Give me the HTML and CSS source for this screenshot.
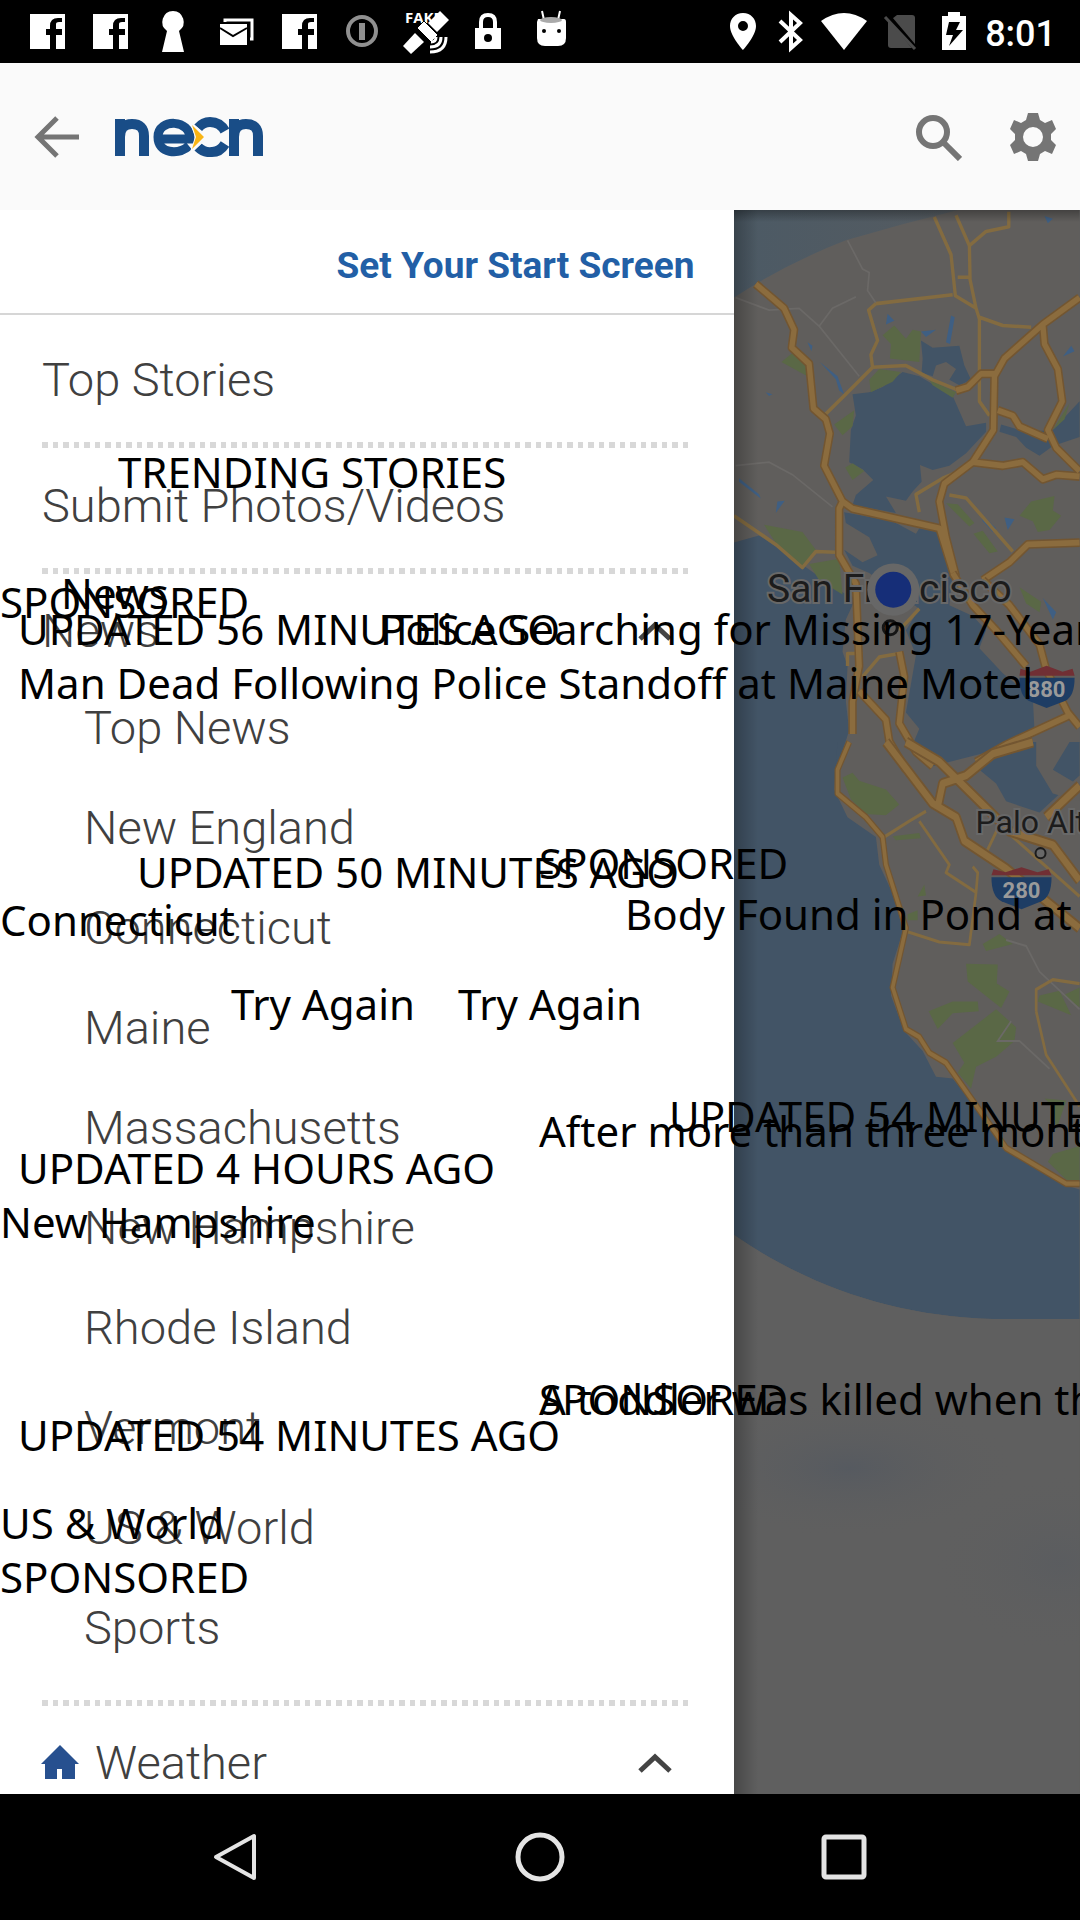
FILE: index.html
```html
<!DOCTYPE html>
<html lang="en">
<head>
<meta charset="utf-8">
<meta name="viewport" content="width=device-width, initial-scale=1">
<title>necn</title>
<link rel="stylesheet" href="styles.css">
</head>
<body>
<svg class="defs" aria-hidden="true">
  <symbol id="fb" viewBox="0 0 63 63"><path fill="#fff" d="M14 14h35v35H40V35h6v-6h-6v-5q0-2 3-2h3v-4h-4q-8 0-8 8v3h-4v6h4v14H14z"/></symbol>
  <symbol id="chevron" viewBox="0 0 36 24"><path d="M3 20 18 6l15 14" fill="none" stroke="#444" stroke-width="5"/></symbol>
</svg>

<header class="status">
  <div class="notices">
    <svg><use href="#fb"/></svg>
    <svg><use href="#fb"/></svg>
    <svg viewBox="0 0 63 63"><path fill="#fff" d="M31 11a11 11 0 0 1 6 20l5 21H20l5-21a11 11 0 0 1 6-20z"/></svg>
    <svg viewBox="0 0 63 63"><path d="M20 22v-2h27v19h-2" fill="none" stroke="#fff" stroke-width="3"/><path fill="#fff" d="M15 24h27v21H15z"/><path d="m15 28 13 8 14-8" fill="none" stroke="#000" stroke-width="2"/></svg>
    <svg><use href="#fb"/></svg>
    <svg viewBox="0 0 63 63"><circle cx="31" cy="31" r="14" fill="none" stroke="#909090" stroke-width="4"/><path d="M31 23v17" stroke="#909090" stroke-width="6"/></svg>
    <svg viewBox="0 0 63 63"><text x="11" y="23" class="fake">FAKE</text><path fill="#fff" d="m46 11 9 9-12 12-9-9z"/><path fill="#fff" stroke="#000" d="m30 21 14 14-7 7-14-14z"/><path fill="#fff" d="m21 33 9 9-13 12-8-8z"/><path d="M37 42q5 0 5-5M36 47q11 0 11-10M36 52q16 0 16-15" fill="none" stroke="#fff" stroke-width="3"/></svg>
    <svg viewBox="0 0 63 63"><path d="M24 30V22q0-7 7-7t7 7v8" fill="none" stroke="#fff" stroke-width="4"/><path fill="#fff" d="M18 28h26v21H18z"/><circle cx="31" cy="38" r="4"/></svg>
    <svg viewBox="0 0 63 63"><path d="m22 11 2 9m16-9-2 9" stroke="#fff" stroke-width="2"/><path fill="#fff" d="M18 19h26q2 0 2 3v16q0 8-8 8H25q-8 0-8-8V22z"/><ellipse cx="31" cy="20" rx="11" ry="3" fill="#aaa"/><circle cx="24" cy="31" r="2"/><circle cx="39" cy="31" r="2"/></svg>
  </div>
  <div class="system">
    <svg class="s48" viewBox="0 0 48 63"><path fill="#fff" fill-rule="evenodd" d="M24 13c8 0 13 6 13 13 0 10-13 24-13 24S11 36 11 26c0-7 5-13 13-13zm0 8a5 5 0 1 0 0 10 5 5 0 0 0 0-10z"/></svg>
    <svg class="s48" viewBox="0 0 48 63"><path d="m13 21 20 19-9 8V15l9 8-20 19" fill="none" stroke="#fff" stroke-width="4"/></svg>
    <svg class="s58" viewBox="0 0 58 63"><path fill="#fff" d="M6 21q23-16 46 0L29 50z"/></svg>
    <svg class="s54" viewBox="0 0 54 63"><path fill="#4b4b4b" d="M24 15h15q3 0 3 3v27q0 3-3 3H18q-3 0-3-3V22z"/><path d="m15 16 28 33" stroke="#000" stroke-width="5"/><path d="m12 17 30 32" stroke="#4b4b4b" stroke-width="3"/></svg>
    <svg class="s54" viewBox="0 0 54 63"><path fill="#fff" fill-rule="evenodd" d="M21 12h12v4h6v34H15V16h6zm1 10-3 13h7l-4 11 14-16h-7l4-8z"/></svg>
    <time class="clock">8:01</time>
  </div>
</header>

<div class="appbar">
  <button class="icon-btn" aria-label="Back"><svg class="i48" viewBox="0 0 48 48"><path d="M46 24H6M24 5 5 24l19 19" fill="none" stroke="#757575" stroke-width="5"/></svg></button>
  <a class="brand" href="#" aria-label="necn">
    <svg viewBox="0 0 150 40"><g fill="none" stroke="#194d87" stroke-width="10"><path d="M5 39V2M5 20q0-13 12-13t12 12v20M119 39V2m0 18q0-13 12-13t12 12v20"/><path d="M41 22h34c1-20-32-21-32 -2 0 17 20 18 31 9" stroke-width="9"/><path d="M83 11q5-6 12-6 10 0 15 9M83 30q6 6 14 5 8 0 13-8"/></g><path fill="#fafafa" d="m74 3 20 17-20 18 6-18z"/><path fill="#f9b515" d="m77 8 12 12-12 12 4-12z"/></svg>
  </a>
  <button class="icon-btn" aria-label="Search"><svg class="i48" viewBox="0 0 48 48"><circle cx="19" cy="19" r="14" fill="none" stroke="#757575" stroke-width="6"/><path d="m30 30 16 16" stroke="#757575" stroke-width="6"/></svg></button>
  <button class="icon-btn" aria-label="Settings"><svg class="i48" viewBox="0 0 48 48"><path fill="#757575" fill-rule="evenodd" d="M19 0h10l2 7 5 3 7-3 4 9-5 5v6l5 5-4 9-7-3-5 3-2 7H19l-2-7-5-3-7 3-4-9 5-5v-6l-5-5 4-9 7 3 5-3zm5 14a10 10 0 1 0 0 20 10 10 0 0 0 0-20z"/></svg></button>
</div>

<main class="stage">
  <nav class="drawer" aria-label="Sections">
    <a class="start" href="#">Set Your Start Screen</a>
    <a class="row" href="#">Top Stories</a>
    <a class="row" href="#">Submit Photos/Videos</a>
    <button class="row plain">News<svg class="chev"><use href="#chevron"/></svg></button>
    <ul class="sub">
      <li><a href="#">Top News</a></li>
      <li><a href="#">New England</a></li>
      <li><a href="#">Connecticut</a></li>
      <li><a href="#">Maine</a></li>
      <li><a href="#">Massachusetts</a></li>
      <li><a href="#">New Hampshire</a></li>
      <li><a href="#">Rhode Island</a></li>
      <li><a href="#">Vermont</a></li>
      <li><a href="#">US &amp; World</a></li>
      <li><a href="#">Sports</a></li>
    </ul>
    <button class="row plain weather"><svg class="home" viewBox="0 0 40 36"><path fill="#27508f" d="M19 0 38 19h-4v15H21V24h-5v10H4V19H0z"/></svg>Weather<svg class="chev"><use href="#chevron"/></svg></button>
  </nav>

  <div class="map">
    <svg viewBox="735 209 345 1585" preserveAspectRatio="xMinYMin slice" role="img" aria-label="Map of the San Francisco Bay Area">
      <defs>
        <linearGradient id="sky" x1="0" y1="0" x2="1" y2="0"><stop offset="0" stop-color="#4c5a65"/><stop offset="1" stop-color="#555b60"/></linearGradient>
        <linearGradient id="edge" x1="0" y1="0" x2="1" y2="0"><stop offset="0" stop-opacity=".25"/><stop offset="1" stop-opacity="0"/></linearGradient>
        <linearGradient id="top" x1="0" y1="0" x2="0" y2="1"><stop offset="0" stop-opacity=".3"/><stop offset="1" stop-opacity="0"/></linearGradient>
        <radialGradient id="cloud"><stop offset="0" stop-color="#565a60"/><stop offset="1" stop-color="#5f5f5f" stop-opacity="0"/></radialGradient>
      </defs>
      <rect x="735" y="209" width="345" height="1585" fill="#605e5c"/>
      <g transform="translate(720 200) scale(.3333 .3571)">
        <path fill="url(#sky)" d="M45 20H740Q560 60 380 110 200 175 45 270z"/>
        <g fill="#425466">
          <path d="M400 540 450 535 490 520 550 478 600 490 700 545 740 630 800 620V645L740 705 690 740 640 752 602 738 607 785 580 812 560 838 500 826 530 872 400 850 410 822 462 780 430 750 390 730 395 640 410 600z"/>
          <path d="M375 870 520 895 590 930 600 915 660 925 685 970 700 1040 690 1130 760 1160 800 1200 780 1250 850 1320 940 1390 945 1480 850 1530 640 1580 580 1520 600 1475 560 1430 590 1270 560 1200 600 1140 450 1040 400 1020 375 975 430 1010 475 990 450 940 380 900z"/>
          <path d="M45 955 120 935 200 985 270 1030 360 1090 410 1110 380 1170 370 1260 385 1300 380 1400 390 1480 355 1580H45z"/>
          <path d="M605 390 640 410 720 405 735 460 755 500 720 515 690 500 710 470 680 450 650 460 640 490 607 480 610 440z"/>
          <path d="M1080 560V660L1000 685 960 712 920 690 890 660 840 645 845 625 920 645 1000 640z"/>
        </g>
        <g fill="#3f5f83"><path d="M505 315 525 335 500 345zM605 365 650 360 620 380zM695 320 706 325 692 400 680 395zM302 450 355 490 375 540 360 530 350 498zM60 775 120 820 125 832 60 785zM175 840 197 838 170 872zM1055 405 1065 420 1030 435zM855 885 885 890 865 920zM780 870 830 915 820 925 790 895zM970 1110 1010 1150 1000 1170zM140 535 160 540 150 545zM975 42 1000 50 985 62zM265 395 280 405 277 420z"/></g>
        <g fill="#5a6846">
          <path d="M490 375 525 348 560 385 580 360 605 365 600 450 512 440 515 400zM187 450 220 425 275 460 265 490zM450 500 480 470 545 478 520 505 455 535zM630 500 710 535 700 550 640 515zM345 625 405 585 400 630 370 655zM378 745 400 733 435 755 400 780zM135 905 250 925 290 975 250 1020 180 970zM270 1015 360 1000 370 1100 300 1060zM680 845 715 848 765 900 750 910zM762 930 790 922 835 980 810 985zM900 880 935 840 1005 825 1000 865 1025 880 990 920 955 925 940 895zM900 1080 965 1120 960 1150 920 1125zM1050 565 1035 610 1000 640z"/>
        </g>
        <path d="M385 110 430 190 450 200 445 250 470 285M50 270 150 305 240 300 300 350 340 300 410 268M300 350 420 490M50 740 150 730 220 765 340 855" fill="none" stroke="#6b6967" stroke-width="5"/>
        <g fill="none" stroke-linejoin="round">
          <g stroke="#836b40" stroke-width="10"><path d="M710 40 750 125 752 220 770 300M750 125 800 85 868 72 868 30M715 213H750M470 287 700 262M470 287 448 305 475 390 455 430 460 465M780 325 850 348 935 353M320 595 380 540 460 465 560 460 640 500 720 530M645 45 695 150 708 265 770 300 780 330V560L810 600M760 740 670 775 590 820 600 870M690 822 740 830 880 980M45 880 170 960 250 1025 290 980 350 982M600 1140 540 1200M540 1265 480 1275 430 1330M385 1300V1265H430"/></g>
          <g stroke="#735631" stroke-width="25"><path id="r1" d="M110 232 195 300 225 360 218 410 270 455 283 580 320 610 332 650 315 740 370 840 360 860V990L410 1070 420 1300 400 1400V1490M370 840 400 860 660 915 705 1050M710 530 745 520 785 483H830M1080 270 970 345 855 440 825 490 822 640 760 730 675 790 660 840 680 940 710 1050M970 345 975 400 1015 470 1028 560 985 640 1010 690 1080 755M835 585 880 600 900 630 985 665M760 730 850 740 910 730 970 778 1010 765 1080 770M1080 955 925 960 870 1010 790 1060"/></g>
          <g stroke="#8b6c3e" stroke-width="16"><use href="#r1"/></g>
          <g stroke="#735631" stroke-width="25"><path id="r2" d="M700 1040 760 1130 830 1200 920 1300M790 1060 870 1130 960 1240 980 1310 1045 1430 1080 1470M540 1260 555 1330 540 1460 590 1540 640 1580M420 1370 500 1450 510 1510 560 1590M770 1568 860 1520 1045 1440"/></g>
          <g stroke="#8b6c3e" stroke-width="16"><use href="#r2"/></g>
        </g>
      </g>
      <g transform="translate(720 740) scale(.3333 .3954)">
        <path fill="#425466" d="M45 0H355L345 120 385 190 470 240 480 310 530 400 550 480 520 560 515 640 555 730 610 780 650 845 700 850 860 1020 1040 1120 1080 1130V1457H820C520 1450 260 1370 45 1245z"/>
        <path fill="#425466" d="M780 70 850 20 940 0H1080V85L960 178 860 150 830 105z"/>
        <path fill="#605e5c" d="M950 0 1050 0 1000 70 1080 110V150L1000 130 950 60z"/>
        <path fill="#5a6846" d="M370 90 400 78 420 98 500 120 540 158 500 185 440 182 395 145zM520 238 600 230 605 243 530 248zM740 560 835 562 832 610 870 630 845 672 745 605zM628 680 700 655 775 655 778 680 700 685 655 725zM700 760 830 675 890 720 885 755 830 795 770 820 755 875 715 835 735 810zM790 510 840 485 880 510 800 528zM960 640 1020 628 1055 690 955 655zM1030 640 1080 620V670zM975 900 1040 905 1010 980 1000 920zM985 1060 1000 1040 1080 1020V1110L1040 1105zM595 390 615 360 620 388zM565 435 595 425V450H565z"/>
        <path d="M860 500 920 515 960 580 1080 675M875 705 835 755H900L990 825" fill="none" stroke="#6b6967" stroke-width="5"/>
        <g fill="none" stroke-linejoin="round">
          <path d="M495 240 570 200 620 175M600 200 690 310 680 330 770 380 775 330 760 315M770 380 750 512 660 505 560 478M800 280 840 210M840 210 1080 390M950 680 980 790 1080 920M950 680V625L1000 600 1080 610" stroke="#836b40" stroke-width="8"/>
          <g stroke="#735631" stroke-width="18"><path id="r3" d="M390 0 355 70V130L440 190 490 240 500 310 560 470 520 620 560 725 600 745 630 785 680 810 860 1025 1040 1115H1080"/></g>
          <g stroke="#8b6c3e" stroke-width="11"><use href="#r3"/></g>
          <g stroke="#735631" stroke-width="28"><path id="r4" d="M500 0 640 155 710 190 735 250 860 320 1080 470M560 0 660 50 870 225 1000 260 1080 350M1080 110 980 190M940 0 820 30 740 85 670 105 655 165"/></g>
          <g stroke="#8b6c3e" stroke-width="18"><use href="#r4"/></g>
        </g>
        <path fill="#5f5f5f" d="M45 1245C260 1370 520 1450 820 1457H1080V2700H45z"/>
      </g>
      <ellipse cx="850" cy="1465" rx="170" ry="70" fill="url(#cloud)"/>
      <ellipse cx="1060" cy="1560" rx="130" ry="90" fill="url(#cloud)" opacity=".5"/>
      <g class="shield"><path fill="#712f34" d="M1021 667 1031 670 1047 664 1063 670 1073 667 1075 674H1020z"/><path fill="#1e3d64" d="M1020 676h55q0 18-9 23l-19 7-18-7q-9-5-9-23z"/><text x="1047" y="695">880</text></g>
      <g class="shield"><path fill="#712f34" d="M994 867 1006 870 1022 865 1038 870 1049 867 1052 873H992z"/><path fill="#1e3d64" d="M992 875h60q0 19-10 24l-20 8-20-8q-10-5-10-24z"/><text x="1022" y="896">280</text></g>
      <g class="places"><text x="768" y="600">San Francisco</text><text x="976" y="831">Palo Alto</text></g>
      <circle cx="891" cy="626" r="7" fill="none" stroke="#151515" stroke-width="3"/>
      <circle cx="1041" cy="851" r="5" fill="#686868" stroke="#1c1c1c" stroke-width="2"/>
      <circle cx="894" cy="588" r="26" fill="#676767"/><circle cx="894" cy="588" r="18" fill="#162e78"/>
      <rect x="735" y="209" width="24" height="1585" fill="url(#edge)"/>
      <rect x="735" y="209" width="345" height="12" fill="url(#top)"/>
    </svg>
  </div>
</main>

<footer class="navbar">
  <button aria-label="Back"><svg viewBox="0 0 50 50"><path d="M43 4v42L5 25z" fill="none" stroke="#e4e4e4" stroke-width="4" stroke-linejoin="round"/></svg></button>
  <button aria-label="Home"><svg viewBox="0 0 50 50"><circle cx="25" cy="25" r="22" fill="none" stroke="#e4e4e4" stroke-width="5"/></svg></button>
  <button aria-label="Recent apps"><svg viewBox="0 0 50 50"><rect x="5" y="5" width="40" height="40" rx="2" fill="none" stroke="#e4e4e4" stroke-width="5"/></svg></button>
</footer>

<div class="labels">
  <span class="t1">TRENDING STORIES</span>
  <span class="t2">News</span>
  <span class="t3">SPONSORED</span>
  <span class="t4">UPDATED 56 MINUTES AGO</span>
  <span class="t5">Police Searching for Missing 17-Year-Old</span>
  <span class="t6">Man Dead Following Police Standoff at Maine Motel</span>
  <span class="t7">SPONSORED</span>
  <span class="t8">UPDATED 50 MINUTES AGO</span>
  <span class="t9">Body Found in Pond at Golf</span>
  <span class="t10">Connecticut</span>
  <span class="t11">Try Again</span>
  <span class="t12">Try Again</span>
  <span class="t13">UPDATED 54 MINUTES AGO</span>
  <span class="t14">After more than three months</span>
  <span class="t15">UPDATED 4 HOURS AGO</span>
  <span class="t16">New Hampshire</span>
  <span class="t17">SPONSORED</span>
  <span class="t18">A toddler was killed when the</span>
  <span class="t19">UPDATED 54 MINUTES AGO</span>
  <span class="t20">US &amp; World</span>
  <span class="t21">SPONSORED</span>
</div>
</body>
</html>
```
FILE: styles.css
```css
* { box-sizing: border-box; }

body {
  margin: 0;
  height: 100vh;
  display: flex;
  flex-direction: column;
  position: relative;
  overflow: hidden;
  background: #000;
  font-family: Roboto, "Liberation Sans", sans-serif;
}

button {
  border: 0;
  padding: 0;
  background: none;
  font: inherit;
  color: inherit;
}

a { color: inherit; text-decoration: none; }
svg { display: block; flex: none; }
.defs { position: absolute; width: 0; height: 0; }

/* status bar */
.status {
  display: flex;
  justify-content: space-between;
  height: 63px;
  flex: none;
  padding: 0 24px 0 16px;
  color: #fff;
}
.notices, .system { display: flex; align-items: center; }
.notices svg { width: 63px; height: 63px; }
.fake { font: bold 15px "Open Sans", sans-serif; fill: #fff; }
.s48 { width: 48px; height: 63px; }
.s54 { width: 54px; height: 63px; }
.s58 { width: 58px; height: 63px; }
.clock { padding: 4px 0 0 4px; font-size: 36px; font-weight: 500; line-height: 60px; }

/* app bar */
.appbar {
  display: flex;
  align-items: center;
  height: 147px;
  flex: none;
  padding: 0 23px 0 33px;
  background: #fafafa;
}
.i48 { width: 48px; height: 48px; }
.brand { flex: 1; padding-left: 34px; }
.brand svg { width: 150px; height: 40px; }
.icon-btn + .icon-btn { margin-left: 47px; }

/* drawer and map */
.stage { flex: 1; min-height: 0; display: flex; overflow: hidden; }
.drawer {
  flex: 0 0 68%;
  background: #fff;
  color: #404040;
  font-size: 47px;
  font-weight: 300;
}
.start {
  display: flex;
  align-items: center;
  justify-content: flex-end;
  height: 105px;
  padding: 8px 40px 0 0;
  border-bottom: 2px solid #d6d6d6;
  color: #225fa6;
  font-size: 37px;
  font-weight: 700;
}
.row,
.sub {
  background: repeating-linear-gradient(90deg, #d8d8d8 0 6px, transparent 6px 11px, #d8d8d8 11px 16px, transparent 16px 21px) bottom / 100% 6px no-repeat;
}
.row {
  display: flex;
  align-items: center;
  width: calc(100% - 87px);
  height: 126px;
  margin-left: 42px;
  padding-bottom: 12px;
}
.start + .row { height: 133px; padding-bottom: 5px; }
.row.plain { height: 103px; padding: 10px 0 0; background: none; }
.chev { width: 36px; height: 24px; margin-left: auto; margin-right: 16px; }
.sub {
  list-style: none;
  margin: 0 45px 0 42px;
  padding: 0 0 29px 42px;
}
.sub li { display: flex; align-items: center; height: 100px; }
.home { width: 40px; height: 36px; margin: 0 14px 0 -1px; }

.map { flex: 1; min-width: 0; background: #5f5f5f; }
.map svg { width: 100%; height: 100%; }
.shield text { font: bold 22px Roboto, sans-serif; fill: #9a9a9a; text-anchor: middle; }
.places { font-size: 39px; fill: #1c1c1c; stroke: #686868; stroke-width: 4px; paint-order: stroke; }
.places text:last-child { font-size: 32px; }

/* system navigation */
.navbar {
  display: flex;
  justify-content: center;
  gap: 254px;
  height: 126px;
  flex: none;
}
.navbar svg { width: 50px; height: 50px; }

/* floating accessibility labels */
.labels {
  position: absolute;
  inset: 0;
  overflow: hidden;
  pointer-events: none;
  color: #000;
  font: 42px/56px "Noto Sans", sans-serif;
}
.labels span { position: absolute; white-space: nowrap; }
.t1 { left: 118px; top: 444px; }
.t2 { left: 61px; top: 565px; }
.t3 { left: 0; top: 574px; }
.t4 { left: 18px; top: 601px; }
.t5 { left: 380px; top: 601px; }
.t6 { left: 18px; top: 655px; }
.t7 { left: 539px; top: 835px; }
.t8 { left: 137px; top: 844px; }
.t9 { left: 625px; top: 886px; }
.t10 { left: 0; top: 892px; }
.t11 { left: 231px; top: 976px; }
.t12 { left: 458px; top: 976px; }
.t13 { left: 669px; top: 1088px; }
.t14 { left: 539px; top: 1103px; }
.t15 { left: 18px; top: 1140px; }
.t16 { left: 0; top: 1194px; }
.t17 { left: 539px; top: 1371px; }
.t18 { left: 539px; top: 1371px; }
.t19 { left: 18px; top: 1407px; }
.t20 { left: 0; top: 1495px; }
.t21 { left: 0; top: 1549px; }
```
